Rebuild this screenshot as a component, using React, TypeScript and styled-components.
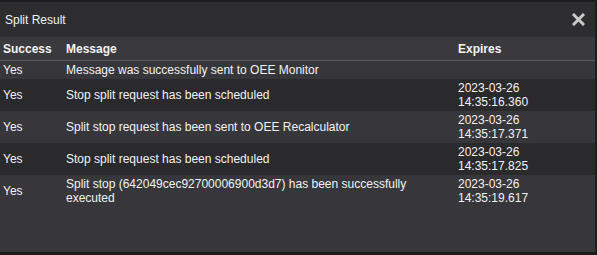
import React from 'react';
import styled, { createGlobalStyle } from 'styled-components';

interface ResultRow {
  success: string;
  message: string;
  expires?: string;
}

const rows: ResultRow[] = [
  { success: 'Yes', message: 'Message was successfully sent to OEE Monitor' },
  { success: 'Yes', message: 'Stop split request has been scheduled', expires: '2023-03-26 14:35:16.360' },
  { success: 'Yes', message: 'Split stop request has been sent to OEE Recalculator', expires: '2023-03-26 14:35:17.371' },
  { success: 'Yes', message: 'Stop split request has been scheduled', expires: '2023-03-26 14:35:17.825' },
  {
    success: 'Yes',
    message: 'Split stop (642049cec92700006900d3d7) has been successfully executed',
    expires: '2023-03-26 14:35:19.617',
  },
];

const GlobalStyle = createGlobalStyle`
  body {
    margin: 0;
    padding-top: 2px;
    background: #1d1d1e;
    font-family: "Liberation Sans", Arial, sans-serif;
    font-size: 12px;
    color: #f2f2f2;
  }
`;

const Dialog = styled.div`
  width: 595px;
  height: 250px;
  background: #37373b;
  display: flex;
  flex-direction: column;
`;

const TitleBar = styled.div`
  height: 35px;
  flex-shrink: 0;
  display: flex;
  align-items: center;
  justify-content: space-between;
  padding: 0 10px 0 5px;
  background: #2d2d30;
  font-size: 12px;
`;

const CloseButton = styled.button`
  border: none;
  background: transparent;
  padding: 0;
  width: 14px;
  height: 14px;
  display: flex;
  align-items: center;
  justify-content: center;
  cursor: pointer;
`;

const Table = styled.table`
  width: 100%;
  border-collapse: collapse;
  table-layout: fixed;
`;

const HeadCell = styled.th<{ $width?: number }>`
  width: ${(p) => (p.$width ? `${p.$width}px` : 'auto')};
  height: 23px;
  padding: 0 3px;
  text-align: left;
  font-weight: bold;
  background: #3a3a3e;
  border-bottom: 1px solid #5a5a5e;
`;

const Row = styled.tr<{ $even: boolean }>`
  background: ${(p) => (p.$even ? '#2a2a2d' : '#37373b')};
`;

const Cell = styled.td`
  padding: 2px 3px;
  vertical-align: middle;
  line-height: 14px;
`;

const Line = styled.span`
  display: block;
`;

const CloseIcon = () => (
  <svg width="13" height="13" viewBox="0 0 13 13">
    <path d="M2 2 L11 11 M11 2 L2 11" stroke="#c9c9c9" strokeWidth="3" strokeLinecap="square" />
  </svg>
);

const App: React.FC = () => {
  return (
    <>
      <GlobalStyle />
      <Dialog>
        <TitleBar>
          <span>Split Result</span>
          <CloseButton aria-label="Close">
            <CloseIcon />
          </CloseButton>
        </TitleBar>
        <Table>
          <thead>
            <tr>
              <HeadCell $width={57}>Success</HeadCell>
              <HeadCell>Message</HeadCell>
              <HeadCell $width={134}>Expires</HeadCell>
            </tr>
          </thead>
          <tbody>
            {rows.map((row, i) => (
              <Row key={i} $even={i % 2 === 1}>
                <Cell>{row.success}</Cell>
                <Cell>{row.message}</Cell>
                <Cell>
                  {row.expires &&
                    row.expires.split(' ').map((part) => <Line key={part}>{part}</Line>)}
                </Cell>
              </Row>
            ))}
          </tbody>
        </Table>
      </Dialog>
    </>
  );
};

export default App;
